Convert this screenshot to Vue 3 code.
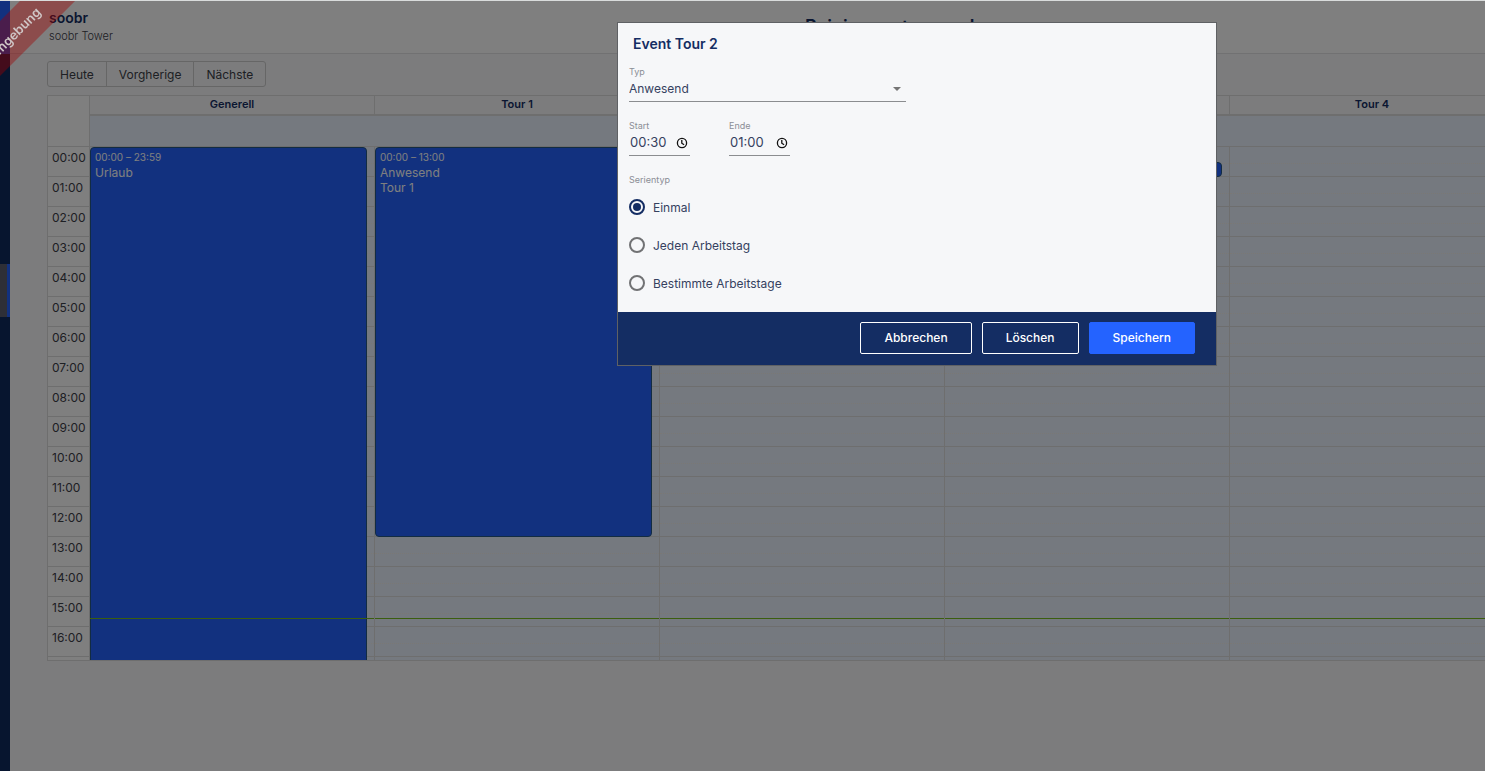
<script setup>
import { ref } from 'vue'

const hours = Array.from({ length: 17 }, (_, i) => String(i).padStart(2, '0') + ':00')
const columns = [
  { name: 'Generell', event: { time: '00:00 – 23:59', lines: ['Urlaub'], start: 0, end: 1439 } },
  { name: 'Tour 1', event: { time: '00:00 – 13:00', lines: ['Anwesend', 'Tour 1'], start: 0, end: 780 } },
  { name: 'Tour 2', event: { time: '', lines: [], start: 30, end: 60 } },
  { name: 'Tour 3', event: { time: '', lines: [], start: 30, end: 60 } },
  { name: 'Tour 4', event: null },
]
const now = 942
const types = ['Anwesend', 'Urlaub']
const type = ref('Anwesend')
const start = ref('00:30')
const end = ref('01:00')
const series = ref('Einmal')
const seriesOptions = ['Einmal', 'Jeden Arbeitstag', 'Bestimmte Arbeitstage']

const place = (e) => ({ top: e.start / 2 + 'px', height: (e.end - e.start) / 2 + 'px' })
</script>

<template>
  <div class="app">
    <nav class="rail" aria-label="Navigation">
      <div class="rail-logo"></div>
      <a class="rail-item" href="#" aria-label="Planung"></a>
    </nav>
    <div class="page">
      <header class="top">
        <div class="brand">
          <strong>soobr</strong>
          <span>soobr Tower</span>
        </div>
        <h1>Reinigungstourenplan</h1>
      </header>
      <main class="content">
        <div class="toolbar">
          <button type="button">Heute</button>
          <button type="button">Vorgherige</button>
          <button type="button">Nächste</button>
        </div>
        <section class="calendar">
          <div class="row head">
            <div class="axis corner"></div>
            <div class="head-columns">
              <div class="names">
                <div v-for="c in columns" :key="c.name" class="name">{{ c.name }}</div>
              </div>
              <div class="allday"></div>
            </div>
          </div>
          <div class="row body">
            <div class="axis">
              <div v-for="h in hours" :key="h" class="hour">{{ h }}</div>
              <div class="hour"></div>
            </div>
            <div v-for="c in columns" :key="c.name" class="column">
              <div v-for="n in 18" :key="n" class="slot"></div>
              <article v-if="c.event" class="event" :style="place(c.event)">
                <small>{{ c.event.time }}</small>
                <span v-for="l in c.event.lines" :key="l">{{ l }}</span>
              </article>
              <div class="now" :style="{ top: now / 2 + 'px' }"></div>
            </div>
          </div>
        </section>
      </main>
    </div>

    <div class="overlay">
      <form class="modal" role="dialog" aria-labelledby="dialog-title" @submit.prevent>
        <div class="modal-body">
          <h2 id="dialog-title">Event Tour 2</h2>
          <div class="field type">
            <label for="type">Typ</label>
            <div class="control">
              <select id="type" v-model="type">
                <option v-for="t in types" :key="t">{{ t }}</option>
              </select>
              <svg class="caret" viewBox="0 0 8 4"><path d="M0 0h8L4 4z" /></svg>
            </div>
          </div>
          <div class="times">
            <div class="field time">
              <label for="start">Start</label>
              <div class="control">
                <input id="start" v-model="start" type="text" />
                <svg class="clock" viewBox="0 0 12 12"><circle cx="6" cy="6" r="4.6" /><path d="M5.8 3v3.2l2.3 1.6" /></svg>
              </div>
            </div>
            <div class="field time">
              <label for="end">Ende</label>
              <div class="control">
                <input id="end" v-model="end" type="text" />
                <svg class="clock" viewBox="0 0 12 12"><circle cx="6" cy="6" r="4.6" /><path d="M5.8 3v3.2l2.3 1.6" /></svg>
              </div>
            </div>
          </div>
          <fieldset>
            <legend>Serientyp</legend>
            <label v-for="o in seriesOptions" :key="o" class="option">
              <input v-model="series" type="radio" name="series" :value="o" />
              <span>{{ o }}</span>
            </label>
          </fieldset>
        </div>
        <footer>
          <button type="button">Abbrechen</button>
          <button type="button">Löschen</button>
          <button type="submit" class="primary">Speichern</button>
        </footer>
      </form>
    </div>
    <div class="ribbon-box"><div class="ribbon">Testumgebung</div></div>
  </div>
</template>

<style>
body {
  overflow: hidden;
}
</style>

<style scoped>
* {
  box-sizing: border-box;
}
.app {
  position: relative;
  display: flex;
  min-height: 100vh;
  overflow: hidden;
  border-top: 1px solid #d9dcdc;
  background: #f8f9fb;
  color: #3c4048;
  font: 12px/15px Inter, sans-serif;
}
button, input, select {
  font: inherit;
  color: inherit;
}
.rail {
  flex: 0 0 10px;
  background: #0f2a5f;
}
.rail-logo {
  height: 53px;
  background: #2463ff;
}
.rail-item {
  display: block;
  height: 53px;
  margin-top: 210px;
  background: #5c5e6e;
  border-right: 3px solid #2463ff;
}
.page {
  flex: 1;
  min-width: 0;
}
.top {
  display: flex;
  height: 53px;
  padding-left: 39px;
  background: #fff;
  border-bottom: 1px solid #e2e3e5;
}
.brand {
  display: flex;
  flex-direction: column;
  gap: 2px;
  width: 756px;
  padding-top: 8px;
}
.brand strong {
  color: #142d63;
  font-size: 14px;
  font-weight: 600;
  line-height: 18px;
}
.brand span {
  font-size: 11px;
  font-weight: 300;
}
h1 {
  margin: 0;
  padding-top: 14px;
  color: #142d63;
  font-size: 18px;
  font-weight: 600;
  line-height: 24px;
}
.content {
  padding: 7px 0 0 37px;
}
.toolbar {
  display: flex;
  margin-bottom: 8px;
}
.toolbar button {
  height: 26px;
  padding: 0 12px;
  background: #f8f9fb;
  border: 1px solid #ccc;
}
.toolbar button + button {
  margin-left: -1px;
}
.toolbar button:first-child {
  border-radius: 3px 0 0 3px;
}
.toolbar button:last-child {
  border-radius: 0 3px 3px 0;
}
.calendar {
  border: solid #ddd;
  border-width: 1px 0 1px 1px;
  overflow: hidden;
}
.row {
  display: flex;
}
.axis {
  flex: 0 0 42px;
  background: #fff;
  border-right: 1px solid #ddd;
}
.head {
  height: 51px;
  border-bottom: 1px solid #ddd;
}
.head-columns {
  flex: none;
}
.names {
  display: flex;
  height: 20px;
  border-bottom: 2px solid #ddd;
}
.name {
  flex: 0 0 285px;
  padding-top: 1px;
  border-right: 1px solid #ddd;
  color: #142d63;
  font-size: 11px;
  font-weight: 600;
  text-align: center;
}
.allday {
  height: 30px;
  background: #ebf3ff;
}
.body {
  height: 513px;
  overflow: hidden;
}
.hour {
  height: 30px;
  padding: 3px 0 0 4px;
  border-bottom: 1px solid #ddd;
}
.column {
  position: relative;
  flex: 0 0 285px;
  background: #ebf3ff;
  border-right: 1px solid #ddd;
}
.slot {
  height: 30px;
  border-bottom: 1px solid #ddd;
}
.slot::before {
  content: '';
  display: block;
  height: 16px;
  border-bottom: 1px dotted #f5f1ea;
}
.event {
  position: absolute;
  left: 0;
  width: 277px;
  padding: 2px 4px;
  display: flex;
  flex-direction: column;
  background: #2463ff;
  border: 1px solid #265985;
  border-radius: 4px;
  color: #fff;
}
.event small {
  font-size: 10px;
}
.now {
  position: absolute;
  left: 0;
  right: 0;
  height: 1px;
  background: #76bd1d;
}
.overlay {
  position: fixed;
  inset: 1px 0 0;
  display: flex;
  justify-content: flex-end;
  align-items: flex-start;
  padding: 21px 268px 0 0;
  background: rgba(0, 0, 0, 0.5);
}
.modal {
  width: 600px;
  border: 1px solid #5f6164;
  background: #f6f7f9;
  color: #35415f;
}
.modal-body {
  padding: 12px 11px 10px;
}
h2 {
  margin: 0 0 14px 4px;
  color: #142d63;
  font-size: 14px;
  font-weight: 600;
  line-height: 18px;
}
.field label,
legend {
  display: block;
  color: #8b8e96;
  font-size: 9px;
  line-height: 10px;
}
.control {
  position: relative;
  display: flex;
  align-items: center;
  height: 25px;
  padding-bottom: 1px;
  border-bottom: 1px solid #8b8d90;
}
.type {
  width: 277px;
}
.control select,
.control input {
  appearance: none;
  width: 100%;
  padding: 0;
  border: 0;
  background: none;
  outline: 0;
}
.control input {
  padding-left: 1px;
  font-size: 13px;
}
.caret {
  position: absolute;
  right: 5px;
  width: 8px;
  height: 4px;
  fill: #757575;
}
.times {
  display: flex;
  gap: 39px;
  margin-top: 19px;
}
.time {
  width: 61px;
}
.clock {
  position: absolute;
  right: 2px;
  width: 12px;
  height: 12px;
  fill: none;
  stroke: #111;
  stroke-width: 1.3;
}
fieldset {
  margin: 19px 0 0;
  padding: 0;
  border: 0;
}
legend {
  padding: 0 0 3px;
}
.option {
  display: flex;
  align-items: center;
  gap: 8px;
  height: 38px;
}
.option input {
  appearance: none;
  flex: none;
  display: grid;
  place-content: center;
  width: 16px;
  height: 16px;
  margin: 0;
  border: 2px solid #717274;
  border-radius: 50%;
}
.option input:checked {
  border-color: #142d63;
}
.option input:checked::before {
  content: '';
  width: 8px;
  height: 8px;
  border-radius: 50%;
  background: #142d63;
}
footer {
  display: flex;
  justify-content: flex-end;
  gap: 10px;
  padding: 10px 21px 11px;
  background: #142d63;
}
footer button {
  height: 32px;
  padding: 0 23px 1px;
  border: 1px solid #fff;
  border-radius: 2px;
  background: none;
  color: #fff;
  font-weight: 500;
}
footer .primary {
  background: #2463ff;
  border-color: #2463ff;
}
.ribbon-box {
  position: absolute;
  inset: 0 auto auto 0;
  width: 100px;
  height: 100px;
  overflow: hidden;
}
.ribbon {
  position: absolute;
  left: -92px;
  top: 20px;
  width: 200px;
  padding-right: 8px;
  transform: rotate(-45deg);
  background: rgba(160, 0, 0, 0.4);
  color: #d0c6c6;
  font-size: 13px;
  font-weight: 600;
  line-height: 39px;
  text-align: center;
}
</style>
